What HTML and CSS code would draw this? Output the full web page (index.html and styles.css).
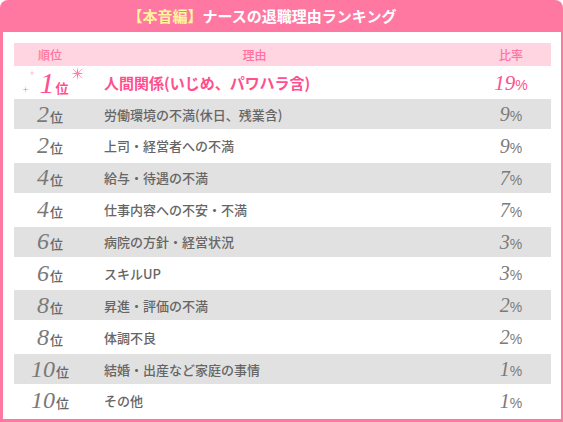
FILE: index.html
```html
<!DOCTYPE html>
<html lang="ja">
<head>
<meta charset="utf-8">
<link rel="stylesheet" href="styles.css">
</head>
<body>
<div class="board">
  <h1 class="title"><span class="hl">【本音編】</span>ナースの退職理由ランキング</h1>
  <div class="panel">
    <div class="table">
      <div class="row head">
        <div class="c-rank">順位</div>
        <div class="c-reason">理由</div>
        <div class="c-pct">比率</div>
      </div>
      <div class="row top">
        <div class="c-rank">
          <span class="rank-wrap">
            <svg class="spark s1" viewBox="0 0 10 10"><path d="M5 0 L5.6 4.4 L10 5 L5.6 5.6 L5 10 L4.4 5.6 L0 5 L4.4 4.4 Z" fill="#ff8fb4"/></svg>
            <svg class="spark s2" viewBox="0 0 10 10"><path d="M5 0 L5.6 4.4 L10 5 L5.6 5.6 L5 10 L4.4 5.6 L0 5 L4.4 4.4 Z" fill="#ff8fb4"/></svg>
            <svg class="spark s3" viewBox="0 0 14 14"><circle cx="7" cy="7" r="2.2" fill="#ffc2d6"/><path d="M7 0 L7.8 6.2 L14 7 L7.8 7.8 L7 14 L6.2 7.8 L0 7 L6.2 6.2 Z" fill="#ff6f9f"/><path d="M2 2 L12 12 M12 2 L2 12" stroke="#ff9dbd" stroke-width="1"/></svg>
            <span class="num">1</span><span class="i">位</span>
          </span>
        </div>
        <div class="c-reason">人間関係(いじめ、パワハラ含)</div>
        <div class="c-pct"><span class="num">19</span><span class="p">%</span></div>
      </div>
      <div class="row gray">
        <div class="c-rank"><span class="num">2</span><span class="i">位</span></div>
        <div class="c-reason">労働環境の不満(休日、残業含)</div>
        <div class="c-pct"><span class="num">9</span><span class="p">%</span></div>
      </div>
      <div class="row">
        <div class="c-rank"><span class="num">2</span><span class="i">位</span></div>
        <div class="c-reason">上司・経営者への不満</div>
        <div class="c-pct"><span class="num">9</span><span class="p">%</span></div>
      </div>
      <div class="row gray">
        <div class="c-rank"><span class="num">4</span><span class="i">位</span></div>
        <div class="c-reason">給与・待遇の不満</div>
        <div class="c-pct"><span class="num">7</span><span class="p">%</span></div>
      </div>
      <div class="row">
        <div class="c-rank"><span class="num">4</span><span class="i">位</span></div>
        <div class="c-reason">仕事内容への不安・不満</div>
        <div class="c-pct"><span class="num">7</span><span class="p">%</span></div>
      </div>
      <div class="row gray">
        <div class="c-rank"><span class="num">6</span><span class="i">位</span></div>
        <div class="c-reason">病院の方針・経営状況</div>
        <div class="c-pct"><span class="num">3</span><span class="p">%</span></div>
      </div>
      <div class="row">
        <div class="c-rank"><span class="num">6</span><span class="i">位</span></div>
        <div class="c-reason">スキルUP</div>
        <div class="c-pct"><span class="num">3</span><span class="p">%</span></div>
      </div>
      <div class="row gray">
        <div class="c-rank"><span class="num">8</span><span class="i">位</span></div>
        <div class="c-reason">昇進・評価の不満</div>
        <div class="c-pct"><span class="num">2</span><span class="p">%</span></div>
      </div>
      <div class="row">
        <div class="c-rank"><span class="num">8</span><span class="i">位</span></div>
        <div class="c-reason">体調不良</div>
        <div class="c-pct"><span class="num">2</span><span class="p">%</span></div>
      </div>
      <div class="row gray">
        <div class="c-rank"><span class="num">10</span><span class="i">位</span></div>
        <div class="c-reason">結婚・出産など家庭の事情</div>
        <div class="c-pct"><span class="num">1</span><span class="p">%</span></div>
      </div>
      <div class="row">
        <div class="c-rank"><span class="num">10</span><span class="i">位</span></div>
        <div class="c-reason">その他</div>
        <div class="c-pct"><span class="num">1</span><span class="p">%</span></div>
      </div>
    </div>
  </div>
</div>
</body>
</html>
```
FILE: styles.css
```css
* { box-sizing: border-box; }
html, body { margin: 0; padding: 0; background: #fff; }
body {
  font-family: "Noto Sans CJK JP", "Noto Sans", sans-serif;
  width: 563px;
  height: 422px;
  overflow: hidden;
}
.board {
  width: 563px;
  height: 422px;
  background: #ff78a2;
  border-radius: 8px 8px 0 0;
  padding: 0 2px 3px 3px;
  display: flex;
  flex-direction: column;
}
.title {
  margin: 0;
  height: 32px;
  line-height: 32px;
  text-align: center;
  font-size: 15px;
  font-weight: bold;
  color: #fff;
  padding-right: 40px;
  white-space: nowrap;
}
.title .hl { color: #fff59a; }
.panel {
  flex: 1;
  background: #fff;
  padding: 11px 10px 0 11px;
}
.table {
  display: flex;
  flex-direction: column;
}
.row {
  display: grid;
  grid-template-columns: 72px 1fr 80px;
  align-items: center;
  height: 33.75px;
  color: #666;
}
.row.gray { background: #e1e1e1; height: 30px; }
.row.head {
  height: 23px;
  background: #ffd5e1;
  color: #ff73a0;
  font-size: 12px;
  font-weight: 500;
}
.row.head .c-rank { text-align: center; }
.row.head .c-reason { text-align: center; padding-right: 48px; padding-left: 0; font-size: 12px; font-weight: 500; }
.row.head .c-pct { text-align: center; }
.row.top { height: 33px; color: #ff4f8e; }
.c-rank {
  text-align: center;
  white-space: nowrap;
}
.c-reason {
  padding-left: 18px;
  font-size: 13px;
  font-weight: 500;
  white-space: nowrap;
}
.row.top .c-reason { font-size: 15px; font-weight: bold; }
.c-pct { text-align: center; white-space: nowrap; }
.num {
  font-family: "Liberation Serif", "DejaVu Serif", serif;
  font-style: italic;
  font-size: 24px;
  color: #7a7a7a;
  line-height: 1;
}
.c-pct .num { font-size: 20px; }
.i {
  font-size: 13px;
  font-weight: 500;
  color: #666;
  margin-left: 1px;
}
.p {
  font-family: "Liberation Sans", "DejaVu Sans", sans-serif;
  font-size: 14px;
  color: #7a7a7a;
}
.row.top .num, .row.top .i, .row.top .p { color: #ff4f8e; }
.row.top .i { font-weight: bold; }
.row.top .c-rank .num { font-size: 30px; }
.row.top .c-pct .num { font-size: 21px; }
.rank-wrap { position: relative; display: inline-block; padding-left: 8px; }
.spark { position: absolute; }
.s1 { width: 6px; height: 6px; left: -2px; top: 2px; }
.s2 { width: 7px; height: 7px; left: -9px; top: 18px; }
.s3 { width: 13px; height: 13px; right: -15px; top: -1px; }
```
